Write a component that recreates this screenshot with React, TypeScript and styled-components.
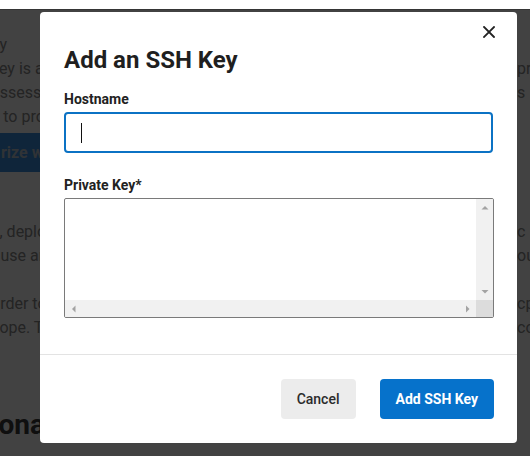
import React from "react";
import styled, { createGlobalStyle } from "styled-components";

const GlobalStyle = createGlobalStyle`
  html, body { margin: 0; padding: 0; background: #f6f6f6; }
  body { font-family: Roboto, "Noto Sans", Arial, sans-serif; overflow: hidden; width: 530px; height: 456px; }
  * { box-sizing: border-box; }
`;

const BgPage = styled.div`
  padding-top: 33px;
  margin-left: -9px;
  background: #fff;
  height: 456px;
  overflow: hidden;
`;

const BgLine = styled.div<{ $gap?: number }>`
  display: grid;
  grid-template-columns: 49px 477px 60px;
  font: 400 16px/24px Roboto, Arial, sans-serif;
  color: #8a8a8a;
  white-space: nowrap;
  margin-top: ${(p) => p.$gap ?? 0}px;
`;

const BgCell = styled.div`
  overflow: hidden;
`;

const BgButton = styled.div`
  margin-top: 4px;
  height: 39px;
  width: 49px;
  display: flex;
  align-items: center;
  padding-left: 10px;
  background: #3d8fe0;
  color: #b8c4d0;
  font: 700 16px/24px Roboto, Arial, sans-serif;
  white-space: nowrap;
  overflow: hidden;
`;

const BgHeading = styled.div`
  margin-top: 68px;
  width: 49px;
  font: 700 28px/34px Roboto, Arial, sans-serif;
  color: #3a3a3a;
  white-space: nowrap;
  overflow: hidden;
`;

const Backdrop = styled.div`
  position: fixed;
  top: 9px;
  left: 0;
  right: 0;
  bottom: 0;
  background: rgba(0, 0, 0, 0.74);
  border-top: 1px solid rgba(0, 0, 0, 0.2);
  padding: 2px 0 0 40px;
`;

const Modal = styled.div`
  position: relative;
  width: 477px;
  background: #fff;
  border-radius: 4px;
  display: flex;
  flex-direction: column;
`;

const CloseButton = styled.button`
  position: absolute;
  top: 8px;
  right: 16px;
  width: 24px;
  height: 24px;
  border: 0;
  padding: 0;
  background: transparent;
  display: flex;
  align-items: center;
  justify-content: center;
  cursor: pointer;
`;

const Body = styled.div`
  padding: 32px 23px 36px 24px;
  display: flex;
  flex-direction: column;
`;

const Title = styled.h2`
  margin: 0 0 13px;
  font: 700 24px/32px Roboto, Arial, sans-serif;
  color: #1f1f1f;
`;

const Label = styled.label<{ $top?: number }>`
  display: block;
  margin: ${(p) => p.$top ?? 0}px 0 3px;
  font: 700 14px/20px Roboto, Arial, sans-serif;
  color: #222;
`;

const InputWrap = styled.div`
  position: relative;
  width: 429px;
`;

const TextInput = styled.input`
  display: block;
  height: 41px;
  width: 100%;
  border: 2px solid #0b72c4;
  border-radius: 4px;
  padding: 0 15px;
  font: 400 16px Roboto, Arial, sans-serif;
  color: #222;
  outline: none;
  caret-color: transparent;
`;

const Caret = styled.span`
  position: absolute;
  left: 17px;
  top: 11px;
  width: 1px;
  height: 20px;
  background: #111;
  pointer-events: none;
`;

const KeyBox = styled.div`
  display: grid;
  grid-template-columns: 1fr 17px;
  grid-template-rows: 1fr 17px;
  height: 120px;
  width: 430px;
  border: 1px solid #7a7a7a;
  border-radius: 2px;
  overflow: hidden;
  background: #fff;
`;

const KeyArea = styled.textarea`
  display: block;
  border: 0;
  padding: 6px 8px;
  font: 400 14px Roboto, Arial, sans-serif;
  resize: none;
  overflow: hidden;
  outline: none;
  background: transparent;
`;

const ScrollTrack = styled.div<{ $vertical?: boolean }>`
  display: flex;
  flex-direction: ${(p) => (p.$vertical ? "column" : "row")};
  justify-content: space-between;
  background: #f1f1f1;
`;

const ScrollArrow = styled.span`
  width: 17px;
  height: 17px;
  display: flex;
  align-items: center;
  justify-content: center;
`;

const ScrollCorner = styled.div`
  background: #dcdcdc;
`;

const arrowPaths: Record<string, string> = {
  up: "M0.5 4.5 L4 1 L7.5 4.5 Z",
  down: "M0.5 1 L4 4.5 L7.5 1 Z",
  left: "M4.5 0.5 L1 4 L4.5 7.5 Z",
  right: "M1 0.5 L4.5 4 L1 7.5 Z",
};

function Arrow({ dir }: { dir: "up" | "down" | "left" | "right" }) {
  const vertical = dir === "up" || dir === "down";
  return (
    <ScrollArrow>
      <svg width={vertical ? 8 : 6} height={vertical ? 6 : 8} viewBox={vertical ? "0 0 8 6" : "0 0 6 8"}>
        <path d={arrowPaths[dir]} fill="#a3a3a3" />
      </svg>
    </ScrollArrow>
  );
}

const Footer = styled.div`
  border-top: 1px solid #e3e3e3;
  padding: 24px 23px 24px 24px;
  display: flex;
  justify-content: flex-end;
  gap: 24px;
`;

const ActionButton = styled.button<{ $primary?: boolean }>`
  height: 40px;
  padding: 0 16px;
  border: 0;
  border-radius: 4px;
  font: ${(p) => (p.$primary ? 700 : 500)} 14px Roboto, Arial, sans-serif;
  background: ${(p) => (p.$primary ? "#0672cb" : "#ececec")};
  color: ${(p) => (p.$primary ? "#fff" : "#2b2b2b")};
  cursor: pointer;
`;

type Line = { left: string; right: string; gap?: number };

const lines: Line[] = [
  { left: "ey", right: "" },
  { left: "key is a", right: "pr" },
  { left: "assessing", right: "s" },
  { left: "s to provide", right: "" },
];

const lines2: Line[] = [
  { left: "e, deploy", right: "c", gap: 48 },
  { left: "r use and", right: "ou" },
  { left: "order to", right: "cp", gap: 24 },
  { left: "cope. The", right: "co" },
];

function BgLines({ items }: { items: Line[] }) {
  return (
    <>
      {items.map((l, i) => (
        <BgLine key={i} $gap={l.gap}>
          <BgCell>{l.left}</BgCell>
          <BgCell />
          <BgCell>{l.right}</BgCell>
        </BgLine>
      ))}
    </>
  );
}

export default function App() {
  return (
    <>
      <GlobalStyle />
      <BgPage>
        <BgLines items={lines} />
        <BgButton>rize with GitHub</BgButton>
        <BgLines items={lines2} />
        <BgHeading>ional</BgHeading>
      </BgPage>
      <Backdrop>
        <Modal role="dialog" aria-label="Add an SSH Key">
          <CloseButton aria-label="Close">
            <svg width="12" height="12" viewBox="0 0 12 12">
              <path d="M1 1L11 11M11 1L1 11" stroke="#222" strokeWidth="1.8" strokeLinecap="square" />
            </svg>
          </CloseButton>
          <Body>
            <Title>Add an SSH Key</Title>
            <Label htmlFor="hostname">Hostname</Label>
            <InputWrap>
              <TextInput id="hostname" />
              <Caret />
            </InputWrap>
            <Label htmlFor="pkey" $top={22}>
              Private Key*
            </Label>
            <KeyBox>
              <KeyArea id="pkey" />
              <ScrollTrack $vertical>
                <Arrow dir="up" />
                <Arrow dir="down" />
              </ScrollTrack>
              <ScrollTrack>
                <Arrow dir="left" />
                <Arrow dir="right" />
              </ScrollTrack>
              <ScrollCorner />
            </KeyBox>
          </Body>
          <Footer>
            <ActionButton>Cancel</ActionButton>
            <ActionButton $primary>Add SSH Key</ActionButton>
          </Footer>
        </Modal>
      </Backdrop>
    </>
  );
}
